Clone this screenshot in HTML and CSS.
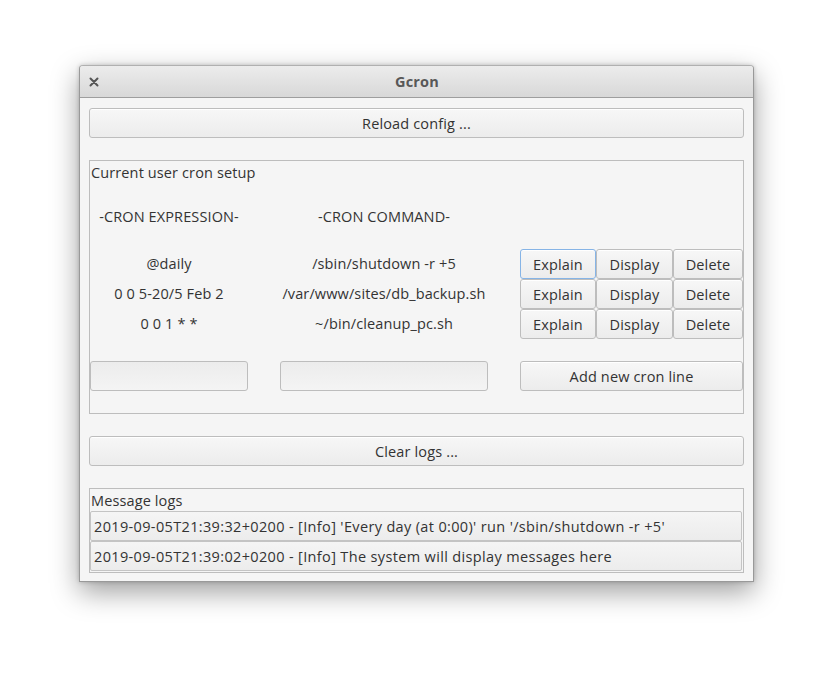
FILE: index.html
```html
<!DOCTYPE html>
<html>
<head>
<meta charset="utf-8">
<link rel="stylesheet" href="styles.css">
</head>
<body>
<div class="window">
  <div class="titlebar">
    <svg class="close" width="10" height="10" viewBox="0 0 10 10"><path d="M1.5 1.5 L8.5 8.5 M8.5 1.5 L1.5 8.5" stroke="#555" stroke-width="2" stroke-linecap="round"/></svg>
    <div class="title">Gcron</div>
  </div>
  <div class="content">
    <button class="btn wide">Reload config ...</button>
    <div class="frame setup">
      <div class="label">Current user cron setup</div>
      <div class="grid">
        <div class="cell head">-CRON EXPRESSION-</div>
        <div class="cell head">-CRON COMMAND-</div>
        <div class="cell"></div>

        <div class="cell">@daily</div>
        <div class="cell">/sbin/shutdown -r +5</div>
        <div class="actions"><button class="btn b1 focus">Explain</button><button class="btn b2">Display</button><button class="btn b3">Delete</button></div>

        <div class="cell">0 0 5-20/5 Feb 2</div>
        <div class="cell">/var/www/sites/db_backup.sh</div>
        <div class="actions"><button class="btn b1">Explain</button><button class="btn b2">Display</button><button class="btn b3">Delete</button></div>

        <div class="cell">0 0 1 * *</div>
        <div class="cell">~/bin/cleanup_pc.sh</div>
        <div class="actions"><button class="btn b1">Explain</button><button class="btn b2">Display</button><button class="btn b3">Delete</button></div>

        <div class="entry e1"></div>
        <div class="entry e2"></div>
        <button class="btn add">Add new cron line</button>
      </div>
    </div>
    <button class="btn wide">Clear logs ...</button>
    <div class="frame logs">
      <div class="label">Message logs</div>
      <div class="logrow">2019-09-05T21:39:32+0200 - [Info] 'Every day (at 0:00)' run '/sbin/shutdown -r +5'</div>
      <div class="logrow">2019-09-05T21:39:02+0200 - [Info] The system will display messages here</div>
    </div>
  </div>
</div>
</body>
</html>
```

FILE: styles.css
```css
* { box-sizing: border-box; }
html, body { margin: 0; padding: 0; background: #ffffff; }
html { height: 100%; }
body {
  min-height: 100%;
  padding: 65px 0 0 79px;
  font-family: "Open Sans", "Noto Sans", sans-serif;
  font-size: 14.5px;
  letter-spacing: 0.12px;
  color: #333333;
}
.window {
  width: 675px;
  height: 517px;
  background: #f5f5f5;
  border: 1px solid #999999;
  border-top-color: #b0b0b0;
  border-radius: 4px 4px 0 0;
  box-shadow: 0 10px 28px rgba(0,0,0,0.38), 0 0 4px rgba(0,0,0,0.2);
  display: flex;
  flex-direction: column;
}
.titlebar {
  height: 32px;
  flex: none;
  display: flex;
  align-items: center;
  position: relative;
  background: linear-gradient(#ececec, #d8d8d8);
  border-bottom: 1px solid #9e9e9e;
  border-radius: 3px 3px 0 0;
}
.close { position: absolute; left: 9px; top: 11px; }
.title {
  flex: 1;
  text-align: center;
  font-weight: bold;
  color: #585858;
  font-size: 14.5px;
  letter-spacing: 0.2px;
  padding-left: 1px;
}
.content {
  padding: 10px 9px 0 9px;
  display: flex;
  flex-direction: column;
}
.btn {
  font-family: inherit;
  font-size: 14.5px;
  letter-spacing: 0.15px;
  color: #333;
  background: linear-gradient(#f7f7f7, #ececec);
  border: 1px solid #bdbdbd;
  border-radius: 3px;
  height: 30px;
  padding: 0;
  margin: 0;
  box-shadow: inset 0 1px 0 #ffffff;
}
.btn.focus { border-color: #86b4e6; }
.wide { width: 655px; }
.frame {
  border: 1px solid #bdbdbd;
  margin-top: 22px;
}
.setup { height: 254px; margin-bottom: 22px; }
.label { padding: 1px 0 0 1px; height: 23px; line-height: 22px; }
.grid {
  display: grid;
  grid-template-columns: 158px 208px 223px;
  column-gap: 32px;
  margin-top: 17px;
}
.cell {
  height: 30px;
  line-height: 30px;
  text-align: center;
  white-space: nowrap;
}
.head { height: 48px; line-height: 30px; padding-top: 1px; }
.actions { display: flex; }
.b1 { width: 76px; }
.b2 { width: 77px; }
.b3 { width: 70px; }
.entry {
  margin-top: 22px;
  height: 30px;
  border: 1px solid #bdbdbd;
  border-radius: 3px;
  background: linear-gradient(#ececec, #f4f4f4);
}
.e1 { width: 158px; }
.e2 { width: 208px; }
.add { margin-top: 22px; width: 223px; }
.logs { height: 85px; }
.logs .label { height: 22px; line-height: 21px; }
.logrow {
  height: 30px;
  line-height: 28px;
  padding: 1px 0 0 3px;
  margin-right: 1px;
  background: linear-gradient(#f5f5f5, #ececec);
  border: 1px solid #c4c4c4;
  border-radius: 2px;
  white-space: nowrap;
  letter-spacing: 0.35px;
}
```
